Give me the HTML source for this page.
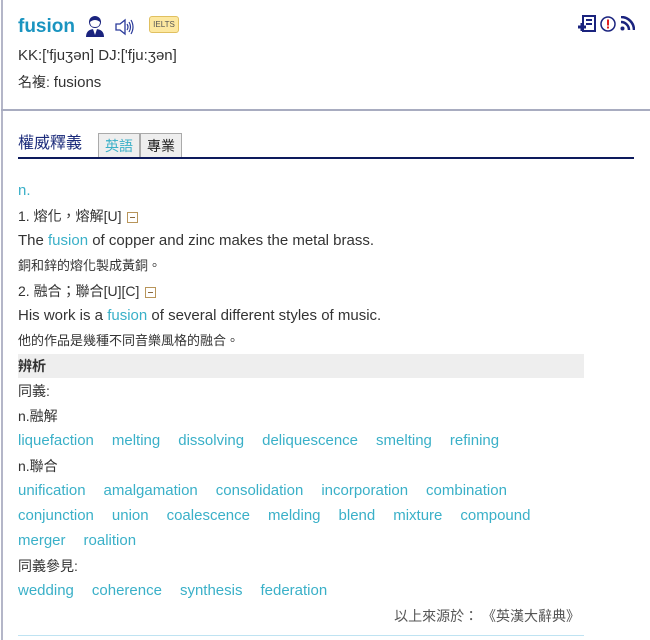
<!DOCTYPE html>
<html><head><meta charset="utf-8"><style>
body{margin:0;width:650px;height:640px;background:#fff;font-family:"Liberation Sans","Noto Sans CJK TC",sans-serif;font-size:14px;color:#333;position:relative;overflow:hidden}
.lb{position:absolute;left:1px;top:0;width:2px;height:640px;background:#b4b6c8}
.hr{position:absolute;left:1px;right:0;top:109px;height:2px;background:#a8acc0}
.a{position:absolute;left:18px;white-space:nowrap;line-height:20px}
.e{font-size:15px}
.b{color:#3ab0c8}
.links{font-size:15px}
.links span{color:#3ab0c8;margin-right:18px}
.mb{display:inline-block;width:9px;height:9px;border:1px solid #b8955a;position:relative;top:0px;margin-left:6px;vertical-align:middle}
.mb:after{content:"";position:absolute;left:2px;top:4px;width:5px;height:1px;background:#8a6a40}
</style></head><body>
<div class="lb"></div>
<div class="hr"></div>
<div class="a" style="top:14px;font-size:19px;font-weight:bold;color:#1a94c0;line-height:26px">fusion</div>
<svg style="position:absolute;left:85px;top:15px" width="20" height="22" viewBox="0 0 20 22"><circle cx="10" cy="7" r="6" fill="#1a237e"/><path d="M5 7 Q10 3 15 7 Q15 12 10 12 Q5 12 5 7Z" fill="#fff"/><path d="M1 22 Q1 14 10 14 Q19 14 19 22Z" fill="#1a237e"/><path d="M8 14 L10 20 L12 14Z" fill="#fff"/></svg>
<svg style="position:absolute;left:115px;top:18px" width="20" height="18" viewBox="0 0 20 18"><path d="M1 6 H5 L10 2 V16 L5 12 H1Z" fill="none" stroke="#2a3a9a" stroke-width="1.3"/><path d="M12 6 Q14 9 12 12 M14 4 Q17 9 14 14 M16 2 Q20 9 16 16" fill="none" stroke="#2a3a9a" stroke-width="1.2"/></svg>
<div style="position:absolute;left:149px;top:16px;width:28px;height:15px;background:#fde8a0;border:1px solid #e0c060;border-radius:3px;font-size:8px;color:#555;text-align:center;line-height:15px">IELTS</div>
<svg style="position:absolute;left:578px;top:15px" width="20" height="18" viewBox="0 0 20 18"><rect x="5" y="1" width="12" height="15" fill="none" stroke="#1a237e" stroke-width="2"/><path d="M8 5H14M8 9H14" stroke="#1a237e" stroke-width="2"/><path d="M0 12H8M4 8V16" stroke="#1a237e" stroke-width="3"/></svg>
<svg style="position:absolute;left:600px;top:16px" width="16" height="16" viewBox="0 0 16 16"><circle cx="8" cy="8" r="7" fill="#fff" stroke="#1a237e" stroke-width="1.5"/><rect x="7" y="3.5" width="2" height="6" fill="#e02020"/><rect x="7" y="10.5" width="2" height="2" fill="#e02020"/></svg>
<svg style="position:absolute;left:620px;top:16px" width="15" height="15" viewBox="0 0 15 15"><circle cx="2.5" cy="12.5" r="2" fill="#1a237e"/><path d="M1 6 A8 8 0 0 1 9 14" fill="none" stroke="#1a237e" stroke-width="2.5"/><path d="M1 1 A13 13 0 0 1 14 14" fill="none" stroke="#1a237e" stroke-width="2.5"/></svg>
<div class="a e" style="top:46px">KK:['fjuʒən] DJ:['fju:ʒən]</div>
<div class="a" style="top:72px">名複: <span class="e">fusions</span></div>
<div class="a" style="top:134px;font-size:16px;color:#1a2a7a">權威釋義</div>
<div style="position:absolute;left:98px;top:133px;width:40px;height:23px;border:1px solid #aaa;border-bottom:none;background:#eee;color:#3ab0c8;text-align:center;line-height:24px">英語</div>
<div style="position:absolute;left:140px;top:133px;width:40px;height:23px;border:1px solid #aaa;border-bottom:none;background:#eee;color:#222;text-align:center;line-height:24px">專業</div>
<div style="position:absolute;left:18px;top:157px;width:616px;height:2px;background:#0d1a5c"></div>
<div class="a b e" style="top:181px">n.</div>
<div class="a" style="top:206px">1. 熔化，熔解[U]<span class="mb"></span></div>
<div class="a e" style="top:231px">The <span class="b">fusion</span> of copper and zinc makes the metal brass.</div>
<div class="a" style="top:256px;font-size:13px">銅和鋅的熔化製成黃銅。</div>
<div class="a" style="top:281px">2. 融合；聯合[U][C]<span class="mb"></span></div>
<div class="a e" style="top:306px">His work is a <span class="b">fusion</span> of several different styles of music.</div>
<div class="a" style="top:331px;font-size:13px">他的作品是幾種不同音樂風格的融合。</div>
<div style="position:absolute;left:18px;top:354px;width:566px;height:24px;background:#eee"></div>
<div class="a" style="top:356px;font-weight:bold">辨析</div>
<div class="a" style="top:381px">同義:</div>
<div class="a" style="top:406px">n.融解</div>
<div class="a links" style="top:431px"><span>liquefaction</span><span>melting</span><span>dissolving</span><span>deliquescence</span><span>smelting</span><span>refining</span></div>
<div class="a" style="top:456px">n.聯合</div>
<div class="a links" style="top:481px"><span>unification</span><span>amalgamation</span><span>consolidation</span><span>incorporation</span><span>combination</span></div>
<div class="a links" style="top:506px"><span>conjunction</span><span>union</span><span>coalescence</span><span>melding</span><span>blend</span><span>mixture</span><span>compound</span></div>
<div class="a links" style="top:531px"><span>merger</span><span>roalition</span></div>
<div class="a" style="top:556px">同義參見:</div>
<div class="a links" style="top:581px"><span>wedding</span><span>coherence</span><span>synthesis</span><span>federation</span></div>
<div style="position:absolute;right:70px;top:606px;line-height:20px;color:#555">以上來源於：&nbsp;《英漢大辭典》</div>
<div style="position:absolute;left:18px;top:635px;width:566px;height:1px;background:#bfe3f2"></div>
</body></html>
